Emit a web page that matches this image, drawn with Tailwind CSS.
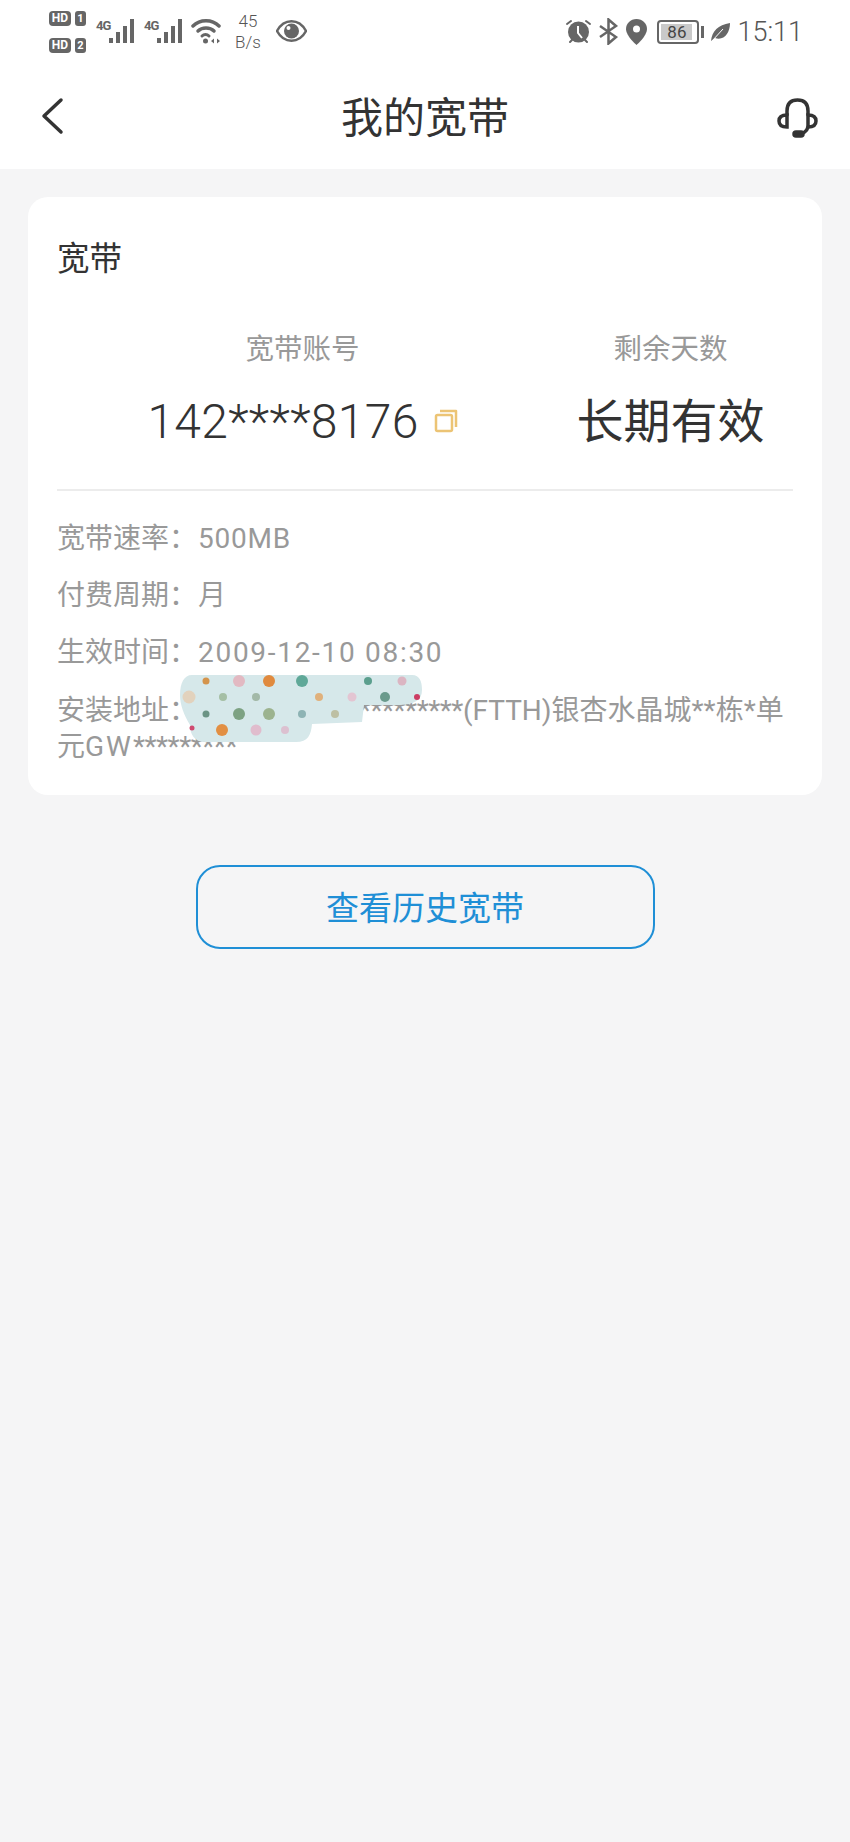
<!DOCTYPE html>
<html lang="zh-CN">
<head>
    <meta charset="UTF-8">
    <meta name="viewport" content="width=device-width, initial-scale=1.0">
    <title>我的宽带</title>
    <script src="https://cdn.jsdelivr.net/npm/@tailwindcss/browser@4"></script>
</head>
<body class="bg-[#f5f5f6] font-['Roboto','Noto_Sans_CJK_SC',sans-serif]">
    <div class="w-[850px] h-[1842px] overflow-hidden">
        <!-- Status bar + title -->
        <div class="bg-white h-[169px]">
            <div class="h-[64px] flex justify-between pl-[49px] pr-[47px] pt-[11px] text-[#666]">
                <div class="flex items-start">
                    <div class="flex flex-col gap-[12px] w-[38px]">
                        <div class="flex gap-[4px]">
                            <span class="w-[22px] h-[15px] rounded-[4px] bg-[#666] text-white text-[12px] leading-[15px] font-bold text-center">HD</span>
                            <span class="w-[11px] h-[15px] rounded-[3px] bg-[#666] text-white text-[11px] leading-[15px] font-bold text-center">1</span>
                        </div>
                        <div class="flex gap-[4px]">
                            <span class="w-[22px] h-[15px] rounded-[4px] bg-[#666] text-white text-[12px] leading-[15px] font-bold text-center">HD</span>
                            <span class="w-[11px] h-[15px] rounded-[3px] bg-[#666] text-white text-[11px] leading-[15px] font-bold text-center">2</span>
                        </div>
                    </div>
                    <div class="relative w-[39px] h-[34px] ml-[9px] mt-[8px] shrink-0">
                        <span class="absolute left-0 top-0 text-[13px] leading-[13px] font-bold tracking-[-1px]">4G</span>
                        <svg class="absolute left-[13px] top-0" width="26" height="25" viewBox="0 0 26 25" fill="#666"><rect x="0" y="19" width="4" height="5"/><rect x="7" y="13" width="4" height="11"/><rect x="14" y="7" width="4" height="17"/><rect x="21" y="0" width="4" height="24"/></svg>
                    </div>
                    <div class="relative w-[39px] h-[34px] ml-[9px] mt-[8px] shrink-0">
                        <span class="absolute left-0 top-0 text-[13px] leading-[13px] font-bold tracking-[-1px]">4G</span>
                        <svg class="absolute left-[13px] top-0" width="26" height="25" viewBox="0 0 26 25" fill="#666"><rect x="0" y="19" width="4" height="5"/><rect x="7" y="13" width="4" height="11"/><rect x="14" y="7" width="4" height="17"/><rect x="21" y="0" width="4" height="24"/></svg>
                    </div>
                    <svg class="ml-[8px] mt-[8px]" width="30" height="26" viewBox="0 0 30 26" fill="none" stroke="#666" stroke-width="3.500" stroke-linecap="round"><path d="M2 7C9 0 21 0 28 7"/><path d="M7 12C11 8 19 8 23 12"/><path d="M11 17C13 15 16 15 18 17" stroke-width="3"/><circle cx="14.500" cy="22" r="2.500" fill="#666" stroke="none"/><path d="M20 22l3-2.500v5zM29 22l-3-2.500v5z" fill="#666" stroke="none"/></svg>
                    <div class="w-[30px] ml-[12px] text-center text-[17px] leading-[21px] font-light text-[#555]">45<br>B/s</div>
                    <svg class="ml-[13px] mt-[9px]" width="31" height="22" viewBox="0 0 31 22"><path d="M1 11C8 -2 23 -2 30 11C23 24 8 24 1 11Z" fill="none" stroke="#666" stroke-width="2.500"/><circle cx="15.500" cy="11" r="7.500" fill="#666"/><circle cx="12.500" cy="8" r="2" fill="#fff"/></svg>
                </div>
                <div class="flex items-start">
                    <svg class="mt-[8px]" width="27" height="25" viewBox="0 0 27 25"><circle cx="13.500" cy="13" r="10.500" fill="#666"/><path d="M13 7v7l4 5" fill="none" stroke="#fff" stroke-width="2"/><path d="M2 5L6 2M25 5L21 2M5 23l2-2M22 23l-2-2" stroke="#666" stroke-width="2" stroke-linecap="round"/></svg>
                    <svg class="ml-[7px] mt-[7px]" width="20" height="27" viewBox="0 0 20 27" fill="none" stroke="#666" stroke-width="2.500"><path d="M1 8L17 19L9.500 25.500V1.500L17 8L1 19"/></svg>
                    <svg class="ml-[7px] mt-[8px]" width="21" height="26" viewBox="0 0 21 26"><path d="M10.500 0C4.500 0 0 4.500 0 10C0 17 10.500 26 10.500 26C10.500 26 21 17 21 10C21 4.500 16.500 0 10.500 0Z" fill="#666"/><circle cx="10.500" cy="10" r="3.500" fill="#fff"/></svg>
                    <div class="ml-[10px] mt-[9px] flex items-center shrink-0">
                        <div class="w-[42px] h-[24px] rounded-[4px] border-2 border-[#666] p-[2px]">
                            <div class="w-[31px] h-[16px] bg-[#c9c9c9] text-[17px] leading-[16px] text-center text-[#444]">86</div>
                        </div>
                        <div class="w-[3px] h-[12px] bg-[#666] ml-[2px]"></div>
                    </div>
                    <svg class="ml-[7px] mt-[12px]" width="19" height="19" viewBox="0 0 19 19"><path d="M0 18C1 8 7 2 19 0C19 10 13 18 4 15Z" fill="#666"/><path d="M1 18L12 6" stroke="#fff" stroke-width="1"/></svg>
                    <span class="ml-[7px] mt-[5px] text-[27px] leading-[32px] font-light text-[#555]">15:11</span>
                </div>
            </div>
            <div class="h-[105px] relative flex items-center justify-center">
                <svg class="absolute left-[40px] top-[33px]" width="24" height="38" viewBox="0 0 24 38" fill="none" stroke="#333" stroke-width="3.500" stroke-linecap="round" stroke-linejoin="round"><path d="M21 3L4 19L21 35"/></svg>
                <span class="text-[42px] leading-[50px] text-[#333] mt-[4px]">我的宽带</span>
                <svg class="absolute left-[776px] top-[34px]" width="43" height="42" viewBox="0 0 43 42" fill="none" stroke="#333" stroke-width="3.500" stroke-linecap="round"><path d="M11 17V13C11 5 15 2 21.500 2C28 2 32 5 32 13V17"/><path d="M11 17C5 17 3 20 3 23C3 26 5 29 11 29Z"/><path d="M32 17C38 17 40 20 40 23C40 26 38 29 32 29Z"/><path d="M32 29C31 33 27 36 22 36"/><rect x="18" y="34" width="9" height="4" rx="2" fill="#333"/></svg>
            </div>
        </div>

        <!-- Broadband card -->
        <div class="relative mx-[28px] mt-[28px] h-[598px] bg-white rounded-[20px] px-[29px] pt-[42px]">
            <div class="text-[32.500px] leading-[40px] text-[#333]">宽带</div>
            <div class="grid grid-cols-[491px_1fr] mt-[53px] text-center">
                <div>
                    <div class="text-[28.500px] leading-[36px] text-[#999]">宽带账号</div>
                    <div class="mt-[18px] h-[72px] flex items-center justify-center">
                        <span class="text-[48px] leading-[72px] text-[#333] font-light tracking-[0.300px]">142****8176</span>
                        <svg class="ml-[15px] -mt-[3px]" width="24" height="24" viewBox="0 0 24 24" fill="none" stroke="#ecc475" stroke-width="2.500" stroke-linejoin="round"><rect x="2" y="6" width="16" height="16" rx="1.500"/><path d="M6 2H22V18"/></svg>
                    </div>
                </div>
                <div>
                    <div class="text-[28.500px] leading-[36px] text-[#999]">剩余天数</div>
                    <div class="mt-[18px] text-[47px] leading-[72px] text-[#333]">长期有效</div>
                </div>
            </div>
            <div class="h-[2px] bg-[#ececec] mt-[31px]"></div>
            <div class="text-[#999] text-[28px] mt-[28px] leading-[40px] flex flex-col gap-[17px]">
                <div>宽带速率：<span class="tracking-[0.800px] ml-[1px]">500MB</span></div>
                <div>付费周期：<span class="ml-[1px]">月</span></div>
                <div>生效时间：<span class="tracking-[1.700px] ml-[1px]">2009-12-10 08:30</span></div>
                <div class="leading-[36px] mt-[3px]">安装地址：<span class="tracking-[-0.500px]">***********************</span>(FTTH)银杏水晶城**栋*单<br>元<span class="tracking-[2px]">GW</span><span class="tracking-[-0.500px]">*********</span></div>
            </div>
            <!-- redaction sticker over the address -->
            <svg class="absolute left-[152px] top-[477px]" width="272" height="72" viewBox="180 674 272 72">
                <path d="M192 675H412C420 675 422 682 422 690C422 700 415 704 400 705H364L362 722L312 724C311 735 308 742 296 742H205C195 742 190 735 190 725C184 715 180 705 180 695C180 683 184 675 192 675Z" fill="#d6e8ea"/>
                <circle cx="206" cy="681" r="3.500" fill="#d4944c"/><circle cx="239" cy="681" r="6" fill="#e2b9c2"/><circle cx="269" cy="681" r="6" fill="#e08a3e"/><circle cx="302" cy="681" r="6" fill="#5fa898"/><circle cx="368" cy="681" r="4" fill="#5b9f8e"/><circle cx="402" cy="681" r="4.500" fill="#dbb5c2"/>
                <circle cx="189" cy="697" r="6.500" fill="#e2d2bd"/><circle cx="223" cy="697" r="4" fill="#a5bfa5"/><circle cx="256" cy="697" r="4" fill="#a3b9a8"/><circle cx="319" cy="697" r="4" fill="#e0b17c"/><circle cx="352" cy="697" r="4.500" fill="#e3c5d2"/><circle cx="385" cy="697" r="5" fill="#6a9a8c"/><circle cx="417" cy="697" r="3" fill="#cc3d63"/>
                <circle cx="206" cy="714" r="3.500" fill="#6b9485"/><circle cx="239" cy="714" r="6" fill="#7da283"/><circle cx="269" cy="714" r="6" fill="#9cb38f"/><circle cx="302" cy="714" r="4" fill="#8db3b4"/><circle cx="335" cy="714" r="4" fill="#bdbfa3"/>
                <circle cx="222" cy="730" r="6" fill="#e28f43"/><circle cx="256" cy="730" r="5.500" fill="#e0bccd"/><circle cx="285" cy="730" r="4" fill="#dcc0d0"/><circle cx="192" cy="728" r="2.500" fill="#cf4a70"/>
            </svg>
        </div>

        <!-- History button -->
        <div class="flex justify-center mt-[70px]">
            <button class="w-[459px] h-[84px] rounded-[24px] border-2 border-[#1f8fd6] text-[#1f8fd6] text-[33px] leading-[40px] pt-[3px]">查看历史宽带</button>
        </div>
    </div>
</body>
</html>
